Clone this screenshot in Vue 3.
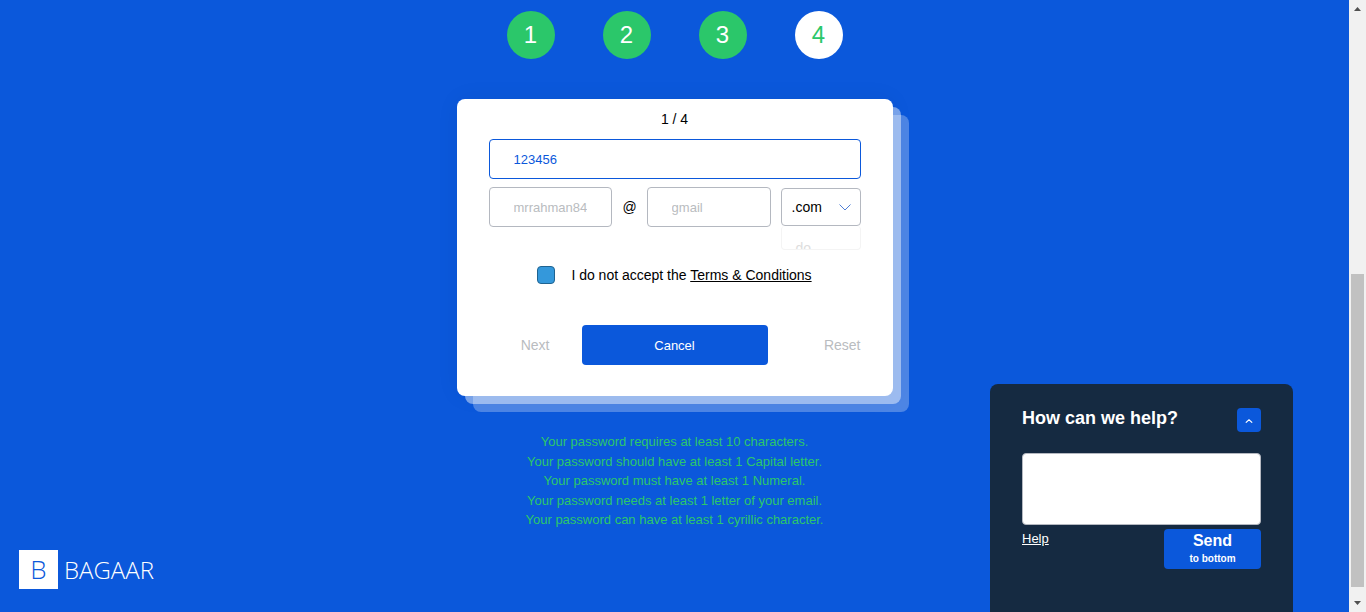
<script setup>
import { ref } from 'vue'

const steps = [1, 2, 3, 4]
const active = ref(4)
const password = ref('123456')
const account = ref('')
const domain = ref('')
const tld = ref('.com')
const refuse = ref(false)
const message = ref('')
const rules = [
  'Your password requires at least 10 characters.',
  'Your password should have at least 1 Capital letter.',
  'Your password must have at least 1 Numeral.',
  'Your password needs at least 1 letter of your email.',
  'Your password can have at least 1 cyrillic character.'
]
</script>

<template>
  <div class="page">
    <main class="main">
      <ol class="steps">
        <li v-for="n in steps" :key="n" :class="['step', { current: n === active }]">{{ n }}</li>
      </ol>

      <form class="card" @submit.prevent>
        <p class="count">1 / 4</p>
        <input v-model="password" class="field filled" type="text" aria-label="Password" />
        <div class="email">
          <input v-model="account" class="field" type="text" placeholder="mrrahman84" aria-label="Email name" />
          <span class="at">@</span>
          <input v-model="domain" class="field" type="text" placeholder="gmail" aria-label="Email domain" />
          <div class="picker">
            <select v-model="tld" class="select" aria-label="Top level domain">
              <option>.com</option>
            </select>
            <svg class="chevron" width="14" height="8" viewBox="0 0 14 8" aria-hidden="true">
              <path d="M1.5 0.5 L7 6 L12.5 0.5" fill="none" stroke="#4f7fd6" stroke-width="1" />
            </svg>
            <div class="menu">do</div>
          </div>
        </div>
        <div class="terms">
          <input id="refuse" v-model="refuse" class="tick" type="checkbox" />
          <label for="refuse">I do not accept the <a href="#">Terms &amp; Conditions</a></label>
        </div>
        <div class="actions">
          <button class="plain next" type="button">Next</button>
          <button class="cancel" type="button">Cancel</button>
          <button class="plain reset" type="reset">Reset</button>
        </div>
      </form>

      <ul class="rules">
        <li v-for="rule in rules" :key="rule">{{ rule }}</li>
      </ul>

      <a class="logo" href="#" aria-label="Bagaar">
        <span class="mark">B</span>
        <span class="word">BAGAAR</span>
      </a>

      <section class="help">
        <header class="help-head">
          <h2>How can we help?</h2>
          <button class="toggle" type="button" aria-label="Toggle help">
            <svg width="8" height="4" viewBox="0 0 8 4" aria-hidden="true">
              <path d="M0.8 3.6 L4 0.9 L7.2 3.6" fill="none" stroke="#fff" stroke-width="1.2" />
            </svg>
          </button>
        </header>
        <textarea v-model="message" class="message" aria-label="Message"></textarea>
        <div class="help-foot">
          <a class="help-link" href="#">Help</a>
          <button class="send" type="button"><span>Send</span><small>to bottom</small></button>
        </div>
      </section>
    </main>

    <div class="scrollbar" aria-hidden="true">
      <svg width="17" height="17" viewBox="0 0 17 17"><path d="M5 11 L8.5 7 L12 11 Z" fill="#505050" /></svg>
      <div class="track"><div class="thumb"></div></div>
      <svg width="17" height="17" viewBox="0 0 17 17"><path d="M5 6 L8.5 10 L12 6 Z" fill="#505050" /></svg>
    </div>
  </div>
</template>

<style>
body {
  background: #0b58db;
}
</style>

<style scoped>
* {
  box-sizing: border-box;
}
.page {
  display: flex;
  min-height: 100vh;
  font: 14px/1.5 "Liberation Sans", Arial, sans-serif;
  color: #000;
}
.main {
  position: relative;
  flex: 1;
  display: flex;
  flex-direction: column;
  align-items: center;
  padding-top: 11px;
  background: #0b58db;
}
button,
input,
select,
textarea {
  font-family: inherit;
  margin: 0;
}
ol,
ul,
p,
h2 {
  margin: 0;
  padding: 0;
  list-style: none;
}
.steps {
  display: flex;
  gap: 48px;
}
.step {
  width: 48px;
  height: 48px;
  border-radius: 50%;
  background: #2bc76a;
  color: #fff;
  font-size: 24px;
  line-height: 48px;
  text-align: center;
}
.step.current {
  background: #fff;
  color: #2bc76a;
}
.card {
  width: 436px;
  max-width: 100%;
  margin-top: 40px;
  padding: 0 32px 31px;
  border-radius: 8px;
  background: #fff;
  box-shadow:
    8px 8px 0 rgba(255, 255, 255, 0.45),
    16px 16px 0 rgba(255, 255, 255, 0.27),
    0 0 24px rgba(0, 0, 0, 0.05);
}
.count {
  line-height: 40px;
  text-align: center;
}
.field {
  display: block;
  width: 100%;
  min-width: 0;
  height: 40px;
  padding: 0 24px;
  border: 1px solid #b4b8c0;
  border-radius: 4px;
  background: #fff;
  color: #0b58db;
  font-size: 13px;
}
.field.filled {
  border-color: #0b58db;
}
.field::placeholder {
  color: #b9bcc0;
  opacity: 1;
}
.email {
  display: flex;
  align-items: center;
  gap: 10px;
  margin-top: 8px;
}
.email .field {
  flex: 1;
}
.picker {
  position: relative;
  width: 80px;
}
.select {
  display: block;
  width: 100%;
  height: 38px;
  padding: 0 10px;
  border: 1px solid #b4b8c0;
  border-radius: 4px;
  appearance: none;
  background: #fff;
  color: #000;
  font-size: 14px;
}
.chevron {
  position: absolute;
  top: 16px;
  right: 9px;
}
.menu {
  position: absolute;
  top: 38px;
  left: 0;
  width: 100%;
  height: 24px;
  padding: 12px 14px 0;
  overflow: hidden;
  border: 1px solid #f4f4f4;
  border-top: 0;
  border-radius: 4px;
  color: #ddd;
}
.terms {
  display: flex;
  justify-content: center;
  align-items: center;
  gap: 16px;
  margin-top: 38px;
  line-height: 20px;
}
.terms a {
  color: inherit;
  text-underline-offset: 1px;
}
.tick {
  appearance: none;
  width: 18px;
  height: 18px;
  border: 1px solid #1f6391;
  border-radius: 4px;
  background: #3498db;
}
.actions {
  display: grid;
  grid-template-columns: 1fr 2fr 1fr;
  margin-top: 40px;
}
.actions button {
  height: 40px;
  border: 0;
}
.plain {
  padding: 0;
  background: none;
  color: #b9bcc0;
  font-size: 14px;
  text-align: right;
}
.actions .next {
  padding-right: 32px;
}
.cancel {
  border-radius: 4px;
  background: #0b58db;
  color: #fff;
  font-size: 13px;
}
.rules {
  margin-top: 36px;
  color: #2bc76a;
  font-size: 13px;
  text-align: center;
}
.logo {
  position: absolute;
  left: 19px;
  bottom: 23px;
  display: flex;
  align-items: center;
  gap: 6px;
  color: #fff;
  font: 300 24px/39px "Open Sans", sans-serif;
  text-decoration: none;
}
.mark {
  width: 39px;
  height: 39px;
  background: #fff;
  color: #0b58db;
  font-size: 26px;
  text-align: center;
}
.help {
  position: absolute;
  right: 56px;
  bottom: 0;
  width: 303px;
  height: 228px;
  padding: 24px 32px;
  border-radius: 8px 8px 0 0;
  background: #152a41;
  color: #fff;
}
.help-head {
  display: flex;
  justify-content: space-between;
}
.help h2 {
  font-size: 18px;
  line-height: 20px;
}
.toggle {
  display: flex;
  align-items: center;
  justify-content: center;
  width: 24px;
  height: 24px;
  padding: 2px 0 0;
  border: 0;
  border-radius: 4px;
  background: #0b58db;
}
.message {
  display: block;
  width: 100%;
  height: 72px;
  margin-top: 21px;
  border: 1px solid #b4b8c0;
  border-radius: 4px;
  background: #fff;
  resize: none;
}
.help-foot {
  display: flex;
  justify-content: space-between;
  align-items: flex-start;
  margin-top: 4px;
}
.help-link {
  color: inherit;
  font-size: 13px;
}
.send {
  display: flex;
  flex-direction: column;
  align-items: center;
  width: 97px;
  height: 40px;
  padding: 2px 0 0;
  border: 0;
  border-radius: 4px;
  background: #0b58db;
  color: #fff;
  font-size: 16px;
  font-weight: bold;
  line-height: 20px;
}
.send small {
  font-size: 10px;
  line-height: 16px;
}
.scrollbar {
  display: flex;
  flex-direction: column;
  width: 17px;
  background: #f1f1f1;
}
.track {
  flex: 1;
  display: flex;
  flex-direction: column;
  justify-content: flex-end;
  padding: 0 2px 8px;
}
.thumb {
  height: 55%;
  background: #c1c1c1;
}
</style>
